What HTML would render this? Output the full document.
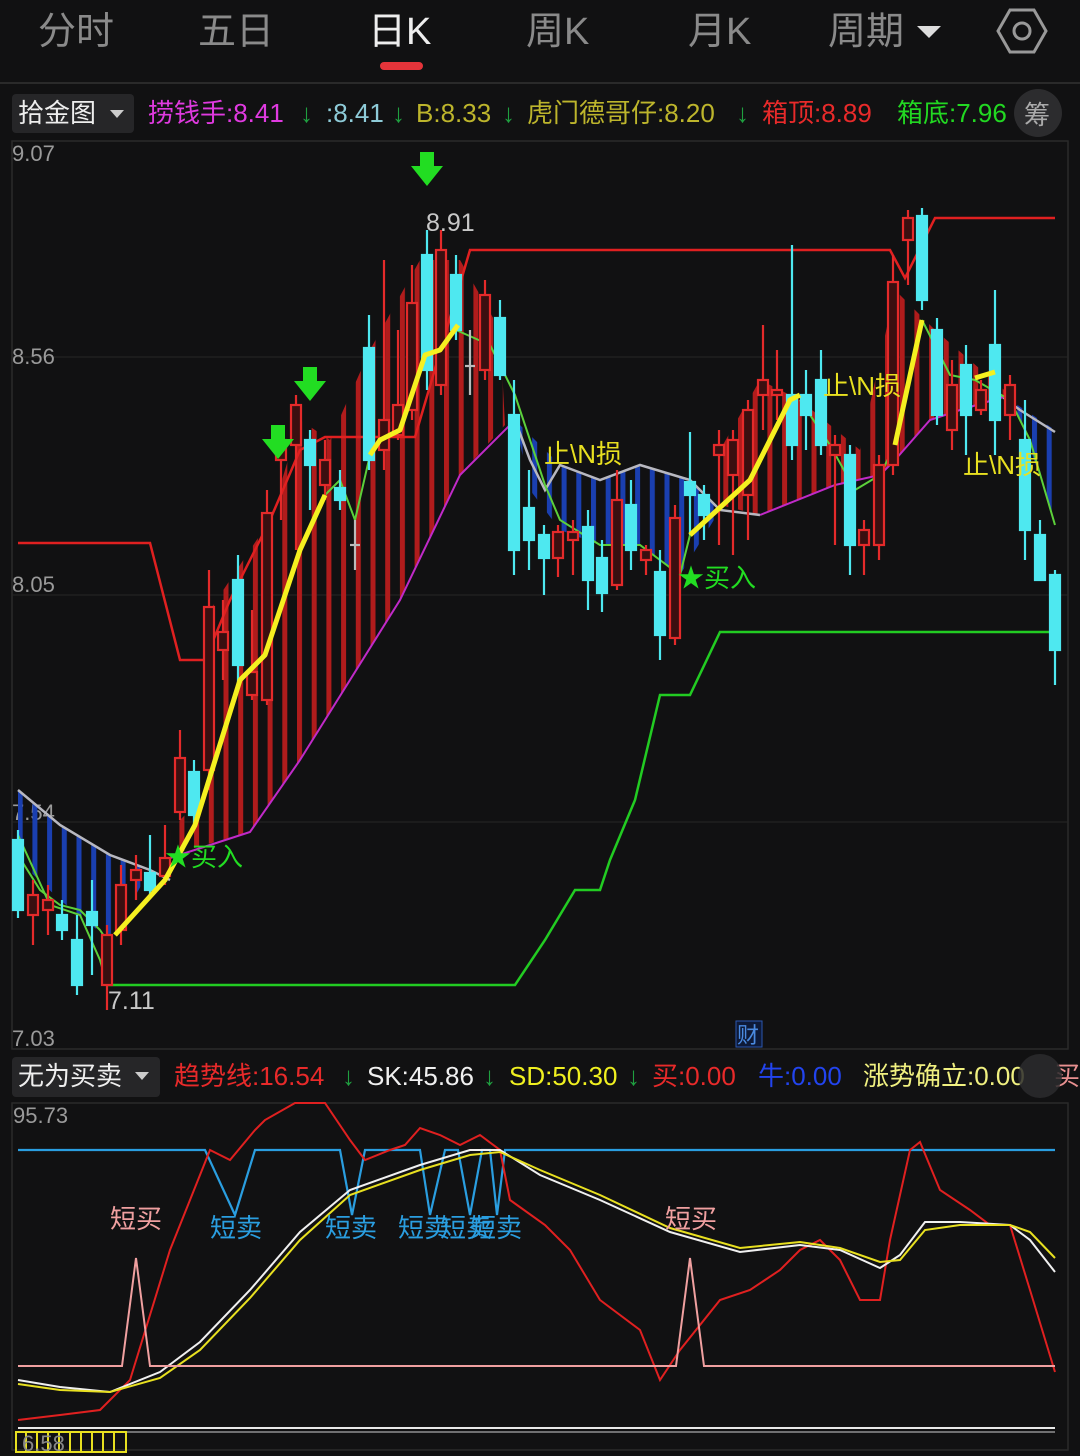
<!DOCTYPE html>
<html><head><meta charset="utf-8"><style>
html,body{margin:0;padding:0;background:#111112;width:1080px;height:1456px;overflow:hidden}
svg{display:block}
text{font-family:"Liberation Sans","Noto Sans CJK SC",sans-serif}
</style></head><body>
<svg width="1080" height="1456" viewBox="0 0 1080 1456" xmlns="http://www.w3.org/2000/svg">
<defs>
<pattern id="rs" width="14.7" height="10" patternUnits="userSpaceOnUse" x="3"><rect x="0" y="0" width="5" height="10" fill="#b01c1c"/></pattern>
<pattern id="bs" width="14.7" height="10" patternUnits="userSpaceOnUse" x="3"><rect x="0" y="0" width="5" height="10" fill="#1a3fb0"/></pattern>
</defs>
<rect width="1080" height="1456" fill="#111112"/>
<!-- tabs -->
<g font-size="38" fill="#8a8a8a">
<text x="38" y="44">分时</text>
<text x="198" y="44">五日</text>
<text x="368" y="44" fill="#eee">日K</text>
<text x="526" y="44">周K</text>
<text x="688" y="44">月K</text>
<text x="828" y="44">周期</text>
</g>
<path d="M917 26h24l-12 12z" fill="#ddd"/>
<path d="M1010 10h24l12 21-12 21h-24l-12-21z" fill="none" stroke="#999" stroke-width="3"/>
<circle cx="1022" cy="31" r="8" fill="none" stroke="#999" stroke-width="3"/>
<rect x="380" y="62" width="43" height="8" rx="4" fill="#e5343a"/>
<line x1="0" y1="83" x2="1080" y2="83" stroke="#2a2a2a" stroke-width="2"/>
<!-- indicator row -->
<rect x="12" y="94" width="122" height="39" rx="4" fill="#262628"/>
<text x="18" y="122" font-size="26" fill="#eee">拾金图</text>
<path d="M110 110h14l-7 8z" fill="#ccc"/>
<g font-size="26">
<text x="148" y="122" fill="#e03ae0">捞钱手:8.41</text>
<text x="300" y="122" fill="#1fa040">↓</text>
<text x="326" y="122" fill="#8ecbd8">:8.41</text>
<text x="392" y="122" fill="#1fa040">↓</text>
<text x="416" y="122" fill="#bdb52c">B:8.33</text>
<text x="502" y="122" fill="#1fa040">↓</text>
<text x="527" y="122" fill="#bdb52c">虎门德哥仔:8.20</text>
<text x="736" y="122" fill="#1fa040">↓</text>
<text x="762" y="122" fill="#e82a2a">箱顶:8.89</text>
<text x="897" y="122" fill="#22d822">箱底:7.96</text>
</g>
<circle cx="1038" cy="113" r="24" fill="#2c2c2e"/>
<text x="1024" y="124" font-size="26" fill="#aaa">筹</text>
<!-- main chart frame -->
<rect x="12" y="141" width="1056" height="908" fill="none" stroke="#2a2a2a" stroke-width="1.5"/>
<g stroke="#262626" stroke-width="1"><line x1="12" y1="357" x2="1068" y2="357"/><line x1="12" y1="595" x2="1068" y2="595"/><line x1="12" y1="822" x2="1068" y2="822"/></g>
<g font-size="22" fill="#9a9a9a">
<text x="12" y="161">9.07</text><text x="12" y="364">8.56</text><text x="12" y="592">8.05</text><text x="12" y="820">7.54</text><text x="12" y="1046">7.03</text>
</g>
<!-- stripes -->
<polygon fill="url(#rs)" points="170,830 200,800 210,610 270,520 300,420 330,440 370,350 420,260 460,260 500,330 505,425 460,475 400,600 300,760 250,832 170,855"/>
<polygon fill="url(#rs)" points="720,450 760,380 800,400 860,450 895,290 935,330 1010,395 960,410 930,420 895,460 880,475 835,485 760,515 720,505"/>
<polygon fill="url(#bs)" points="18,790 60,825 110,855 150,870 110,940 60,900 18,860"/>
<polygon fill="url(#bs)" points="515,420 560,465 600,480 640,465 690,480 720,510 680,575 640,545 600,545 560,530 530,490"/>
<polygon fill="url(#bs)" points="1010,400 1055,430 1055,520 1020,420"/>
<!-- box lines -->
<polyline fill="none" stroke="#e02020" stroke-width="2.5" points="18,543 150,543 180,660 205,660 230,600 270,520 300,450 325,437 415,437 470,250 890,250 905,278 935,218 1055,218"/>
<polyline fill="none" stroke="#22cc22" stroke-width="2.5" points="107,985 515,985 545,940 575,890 600,890 610,860 635,800 660,695 690,695 720,632 1055,632"/>
<!-- gray upper -->
<polyline fill="none" stroke="#b8b8c0" stroke-width="2.5" points="18,790 60,825 110,855 150,870 170,880"/>
<polyline fill="none" stroke="#b8b8c0" stroke-width="2.5" points="515,420 530,460 545,490 560,465 600,480 640,465 690,480 720,510 760,515"/>
<polyline fill="none" stroke="#b8b8c0" stroke-width="2.5" points="1000,395 1020,410 1055,432"/>
<!-- magenta -->
<polyline fill="none" stroke="#c02ac8" stroke-width="2" points="170,858 250,832 300,760 400,600 460,475 515,420"/>
<polyline fill="none" stroke="#c02ac8" stroke-width="2" points="760,515 835,485 880,475 895,460 930,420 960,410 1010,395"/>
<!-- green thin -->
<polyline fill="none" stroke="#5cd03a" stroke-width="2" points="18,855 40,890 60,905 80,910 100,930 110,945"/>
<polyline fill="none" stroke="#5cd03a" stroke-width="2" points="18,835 50,905 80,915 100,960 107,985"/>
<polyline fill="none" stroke="#5cd03a" stroke-width="2" points="325,495 340,480 355,520 370,455"/>
<polyline fill="none" stroke="#5cd03a" stroke-width="2" points="456,330 490,345 515,395 545,485 560,520 600,545 640,545 680,575 690,535"/>
<polyline fill="none" stroke="#5cd03a" stroke-width="2" points="800,400 830,445 855,490 880,475 895,445"/>
<polyline fill="none" stroke="#5cd03a" stroke-width="2" points="922,320 950,375 975,380 1010,400 1030,440 1055,525"/>
<!-- candles -->
<g id="c" stroke-width="2.2">
<g stroke="#4ee8f0" fill="#4ee8f0">
<line x1="18" y1="830" x2="18" y2="918"/><rect x="13" y="840" width="10" height="70"/>
<line x1="62" y1="900" x2="62" y2="940"/><rect x="57" y="915" width="10" height="15"/>
<line x1="77" y1="915" x2="77" y2="995"/><rect x="72" y="940" width="10" height="45"/>
<line x1="92" y1="880" x2="92" y2="975"/><rect x="87" y="912" width="10" height="13"/>
<line x1="150" y1="835" x2="150" y2="895"/><rect x="145" y="873" width="10" height="17"/>
<line x1="194" y1="760" x2="194" y2="830"/><rect x="189" y="772" width="10" height="43"/>
<line x1="238" y1="555" x2="238" y2="690"/><rect x="233" y="580" width="10" height="85"/>
<line x1="310" y1="430" x2="310" y2="510"/><rect x="305" y="440" width="10" height="25"/>
<line x1="340" y1="470" x2="340" y2="510"/><rect x="335" y="488" width="10" height="12"/>
<line x1="369" y1="315" x2="369" y2="470"/><rect x="364" y="348" width="10" height="112"/>
<line x1="427" y1="230" x2="427" y2="390"/><rect x="422" y="255" width="10" height="115"/>
<line x1="456" y1="255" x2="456" y2="340"/><rect x="451" y="275" width="10" height="55"/>
<line x1="500" y1="300" x2="500" y2="380"/><rect x="495" y="318" width="10" height="57"/>
<line x1="514" y1="380" x2="514" y2="575"/><rect x="509" y="415" width="10" height="135"/>
<line x1="529" y1="470" x2="529" y2="570"/><rect x="524" y="508" width="10" height="32"/>
<line x1="544" y1="525" x2="544" y2="595"/><rect x="539" y="535" width="10" height="23"/>
<line x1="588" y1="510" x2="588" y2="610"/><rect x="583" y="527" width="10" height="53"/>
<line x1="602" y1="540" x2="602" y2="612"/><rect x="597" y="558" width="10" height="35"/>
<line x1="631" y1="480" x2="631" y2="570"/><rect x="626" y="505" width="10" height="45"/>
<line x1="660" y1="550" x2="660" y2="660"/><rect x="655" y="572" width="10" height="63"/>
<line x1="690" y1="432" x2="690" y2="535"/><rect x="685" y="482" width="10" height="13"/>
<line x1="704" y1="485" x2="704" y2="540"/><rect x="699" y="495" width="10" height="20"/>
<line x1="792" y1="245" x2="792" y2="460"/><rect x="787" y="395" width="10" height="50"/>
<line x1="806" y1="370" x2="806" y2="450"/><rect x="801" y="395" width="10" height="20"/>
<line x1="821" y1="350" x2="821" y2="455"/><rect x="816" y="380" width="10" height="65"/>
<line x1="850" y1="445" x2="850" y2="575"/><rect x="845" y="455" width="10" height="90"/>
<line x1="922" y1="208" x2="922" y2="310"/><rect x="917" y="216" width="10" height="84"/>
<line x1="937" y1="318" x2="937" y2="425"/><rect x="932" y="330" width="10" height="85"/>
<line x1="966" y1="345" x2="966" y2="455"/><rect x="961" y="365" width="10" height="50"/>
<line x1="995" y1="290" x2="995" y2="455"/><rect x="990" y="345" width="10" height="75"/>
<line x1="1025" y1="400" x2="1025" y2="560"/><rect x="1020" y="440" width="10" height="90"/>
<line x1="1040" y1="520" x2="1040" y2="580"/><rect x="1035" y="535" width="10" height="45"/>
<line x1="1055" y1="570" x2="1055" y2="685"/><rect x="1050" y="575" width="10" height="75"/>
</g>
<g stroke="#e42a2a" fill="#3a0f10">
<line x1="33" y1="880" x2="33" y2="945"/><rect x="28" y="895" width="10" height="20"/>
<line x1="48" y1="885" x2="48" y2="935"/><rect x="43" y="900" width="10" height="10"/>
<line x1="107" y1="925" x2="107" y2="1010"/><rect x="102" y="935" width="10" height="50"/>
<line x1="121" y1="865" x2="121" y2="945"/><rect x="116" y="885" width="10" height="45"/>
<line x1="136" y1="855" x2="136" y2="900"/><rect x="131" y="870" width="10" height="10"/>
<line x1="165" y1="825" x2="165" y2="885"/><rect x="160" y="858" width="10" height="18"/>
<line x1="180" y1="730" x2="180" y2="820"/><rect x="175" y="758" width="10" height="54"/>
<line x1="209" y1="570" x2="209" y2="790"/><rect x="204" y="607" width="10" height="163"/>
<line x1="223" y1="600" x2="223" y2="680"/><rect x="218" y="632" width="10" height="18"/>
<line x1="252" y1="610" x2="252" y2="700"/><rect x="247" y="672" width="10" height="23"/>
<line x1="267" y1="490" x2="267" y2="705"/><rect x="262" y="513" width="10" height="187"/>
<line x1="281" y1="430" x2="281" y2="520"/><rect x="276" y="440" width="10" height="20"/>
<line x1="296" y1="395" x2="296" y2="550"/><rect x="291" y="405" width="10" height="40"/>
<line x1="325" y1="440" x2="325" y2="500"/><rect x="320" y="460" width="10" height="25"/>
<line x1="384" y1="260" x2="384" y2="470"/><rect x="379" y="420" width="10" height="30"/>
<line x1="398" y1="330" x2="398" y2="440"/><rect x="393" y="405" width="10" height="30"/>
<line x1="412" y1="265" x2="412" y2="420"/><rect x="407" y="303" width="10" height="107"/>
<line x1="441" y1="230" x2="441" y2="395"/><rect x="436" y="250" width="10" height="135"/>
<line x1="485" y1="280" x2="485" y2="380"/><rect x="480" y="295" width="10" height="75"/>
<line x1="558" y1="525" x2="558" y2="577"/><rect x="553" y="532" width="10" height="26"/>
<line x1="573" y1="520" x2="573" y2="575"/><rect x="568" y="532" width="10" height="8"/>
<line x1="617" y1="470" x2="617" y2="590"/><rect x="612" y="500" width="10" height="85"/>
<line x1="646" y1="545" x2="646" y2="575"/><rect x="641" y="550" width="10" height="10"/>
<line x1="675" y1="505" x2="675" y2="645"/><rect x="670" y="518" width="10" height="120"/>
<line x1="719" y1="430" x2="719" y2="545"/><rect x="714" y="445" width="10" height="10"/>
<line x1="733" y1="430" x2="733" y2="555"/><rect x="728" y="440" width="10" height="35"/>
<line x1="748" y1="400" x2="748" y2="540"/><rect x="743" y="410" width="10" height="85"/>
<line x1="763" y1="325" x2="763" y2="430"/><rect x="758" y="380" width="10" height="15"/>
<line x1="777" y1="350" x2="777" y2="420"/><rect x="772" y="390" width="10" height="5"/>
<line x1="835" y1="435" x2="835" y2="545"/><rect x="830" y="445" width="10" height="10"/>
<line x1="864" y1="520" x2="864" y2="575"/><rect x="859" y="530" width="10" height="15"/>
<line x1="879" y1="455" x2="879" y2="560"/><rect x="874" y="465" width="10" height="80"/>
<line x1="893" y1="255" x2="893" y2="475"/><rect x="888" y="282" width="10" height="183"/>
<line x1="908" y1="210" x2="908" y2="285"/><rect x="903" y="218" width="10" height="22"/>
<line x1="952" y1="360" x2="952" y2="450"/><rect x="947" y="385" width="10" height="45"/>
<line x1="981" y1="380" x2="981" y2="415"/><rect x="976" y="390" width="10" height="20"/>
<line x1="1010" y1="375" x2="1010" y2="440"/><rect x="1005" y="385" width="10" height="30"/>
</g>
<g stroke="#bbb"><line x1="355" y1="520" x2="355" y2="570"/><line x1="350" y1="545" x2="360" y2="545"/><line x1="470" y1="330" x2="470" y2="395"/><line x1="465" y1="366" x2="475" y2="366"/></g>
</g>
<!-- yellow thick -->
<g fill="none" stroke="#f5f020" stroke-width="5" stroke-linejoin="round">
<polyline points="115,935 165,880 195,825 240,680 265,655 300,550 325,495"/>
<polyline points="370,455 380,440 400,430 425,355 440,350 458,325"/>
<polyline points="690,535 750,480 790,400 800,395"/>
<polyline points="895,445 922,320"/>
<polyline points="975,378 995,372"/>
</g>
<!-- arrows -->
<g fill="#22dd22">
<path d="M420 152h14v14h9l-16 20-16-20h9z"/>
<path d="M303 367h14v14h9l-16 20-16-20h9z"/>
<path d="M271 425h14v14h9l-16 20-16-20h9z"/>
</g>
<text x="426" y="231" font-size="25" fill="#c8c8c8">8.91</text>
<text x="108" y="1009" font-size="25" fill="#c8c8c8">7.11</text>
<g font-size="26" fill="#e8e020">
<text x="544" y="463">止\N损</text><text x="823" y="395">止\N损</text><text x="963" y="474">止\N损</text>
</g>
<g font-size="26" fill="#22dd22"><text x="165" y="866">★买入</text><text x="678" y="587">★买入</text></g>
<rect x="736" y="1021" width="26" height="26" fill="#0e1a38" stroke="#2a56b0"/>
<text x="737" y="1043" font-size="22" fill="#4a8ae0">财</text>
<!-- lower indicator header -->
<rect x="12" y="1057" width="148" height="40" rx="4" fill="#262628"/>
<text x="18" y="1085" font-size="26" fill="#eee">无为买卖</text>
<path d="M135 1072h14l-7 8z" fill="#ccc"/>
<g font-size="26">
<text x="174" y="1085" fill="#e82a2a">趋势线:16.54</text>
<text x="342" y="1085" fill="#1fa040">↓</text>
<text x="367" y="1085" fill="#f0f0f0">SK:45.86</text>
<text x="483" y="1085" fill="#1fa040">↓</text>
<text x="509" y="1085" fill="#f0f020">SD:50.30</text>
<text x="627" y="1085" fill="#1fa040">↓</text>
<text x="652" y="1085" fill="#e82a2a">买:0.00</text>
<text x="758" y="1085" fill="#2244ee">牛:0.00</text>
<text x="863" y="1085" fill="#f0f080">涨势确立:0.00</text>
<text x="1054" y="1085" fill="#e89090">买</text>
</g>
<circle cx="1040" cy="1076" r="22" fill="#2c2c2e" opacity="0.85"/>
<rect x="12" y="1103" width="1056" height="347" fill="none" stroke="#2a2a2a" stroke-width="1.5"/>
<text x="13" y="1123" font-size="22" fill="#9a9a9a">95.73</text>
<!-- lower lines -->
<polyline fill="none" stroke="#2a9ee0" stroke-width="2.2" points="18,1150 205,1150 235,1215 255,1150 340,1150 352,1215 365,1150 420,1150 430,1215 445,1150 458,1150 470,1215 482,1150 490,1150 497,1215 505,1150 1055,1150"/>
<polyline fill="none" stroke="#e02020" stroke-width="2" points="18,1420 60,1415 100,1410 130,1380 170,1250 210,1150 230,1160 255,1130 265,1120 295,1103 325,1103 350,1140 365,1160 390,1150 405,1145 420,1128 440,1135 460,1145 480,1135 500,1150 510,1200 545,1225 570,1250 600,1300 640,1330 660,1380 680,1350 720,1300 750,1290 780,1270 800,1250 820,1240 840,1260 860,1300 880,1300 890,1240 910,1150 920,1142 940,1190 970,1210 990,1225 1010,1225 1030,1290 1055,1372"/>
<polyline fill="none" stroke="#f0f0f0" stroke-width="2" points="18,1380 60,1387 110,1392 160,1372 200,1342 250,1290 300,1232 350,1190 420,1165 470,1150 500,1150 540,1175 600,1200 670,1232 740,1252 800,1245 840,1250 880,1268 900,1255 925,1222 960,1222 1010,1225 1030,1240 1055,1272"/>
<polyline fill="none" stroke="#e8e020" stroke-width="2" points="18,1384 60,1390 110,1392 160,1378 200,1350 250,1298 300,1240 350,1195 420,1170 470,1155 500,1152 540,1170 600,1195 670,1228 740,1248 800,1242 840,1248 880,1262 900,1260 925,1230 960,1225 1010,1225 1030,1232 1055,1258"/>
<polyline fill="none" stroke="#f0a0a0" stroke-width="2" points="18,1366 122,1366 136,1258 150,1366 676,1366 690,1258 704,1366 1055,1366"/>
<g font-size="26"><text x="110" y="1228" fill="#f0a0a0">短买</text><text x="665" y="1228" fill="#f0a0a0">短买</text>
<g fill="#2a9ee0"><text x="210" y="1237">短卖</text><text x="325" y="1237">短卖</text><text x="398" y="1237">短卖</text><text x="440" y="1237">短卖</text><text x="470" y="1237">短卖</text></g></g>
<line x1="18" y1="1428" x2="1055" y2="1428" stroke="#e8e8e8" stroke-width="2"/>
<line x1="18" y1="1432" x2="1055" y2="1432" stroke="#aaa" stroke-width="1.2"/>
<g fill="none" stroke="#e8e020" stroke-width="2">
<rect x="16" y="1432" width="110" height="20"/>
<path d="M26 1432v20M37 1432v20M48 1432v20M59 1432v20M70 1432v20M81 1432v20M92 1432v20M103 1432v20M114 1432v20"/>
</g>
<text x="22" y="1451" font-size="22" fill="#888">6.58</text>
</svg>
</body></html>
